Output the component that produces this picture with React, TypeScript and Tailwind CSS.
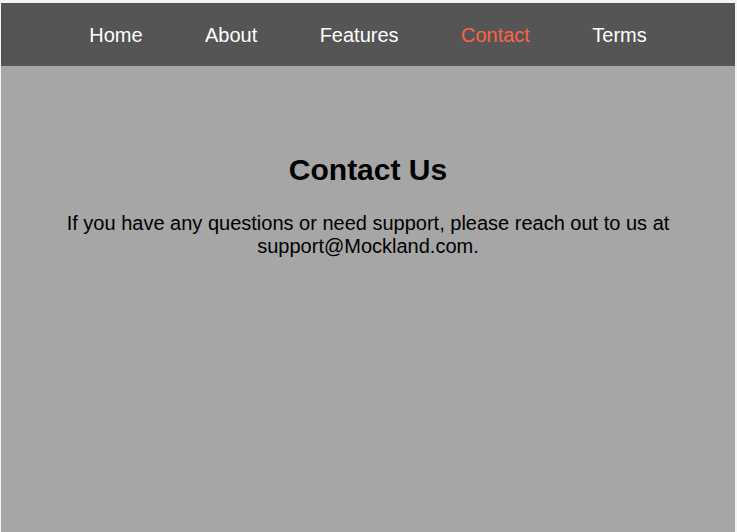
import React from 'react'

const links = ['Home', 'About', 'Features', 'Contact', 'Terms']

const App = () => {
  return (
    <div className="h-[532px] w-[737px] bg-[#f3f3f3] pt-[3px] pl-px pr-[2px] font-['Liberation_Sans',Arial,sans-serif]">
      <div className="flex h-full flex-col bg-[#a6a6a6]">
        <nav className="flex h-[63px] items-center justify-center bg-[#555555]">
          {links.map((link) => (
            <a
              key={link}
              href="#"
              className={
                link === 'Contact'
                  ? 'px-[31.2px] text-[20px] text-[#ff6347]'
                  : 'px-[31.2px] text-[20px] text-white'
              }
            >
              {link}
            </a>
          ))}
        </nav>
        <main className="px-10 pt-[87px] text-center text-black">
          <h1 className="text-[30px] font-bold leading-[34px]">Contact Us</h1>
          <p className="mt-[25px] text-[20px] leading-[23px]">
            If you have any questions or need support, please reach out to us at
            support@Mockland.com.
          </p>
        </main>
      </div>
    </div>
  )
}

export default App
